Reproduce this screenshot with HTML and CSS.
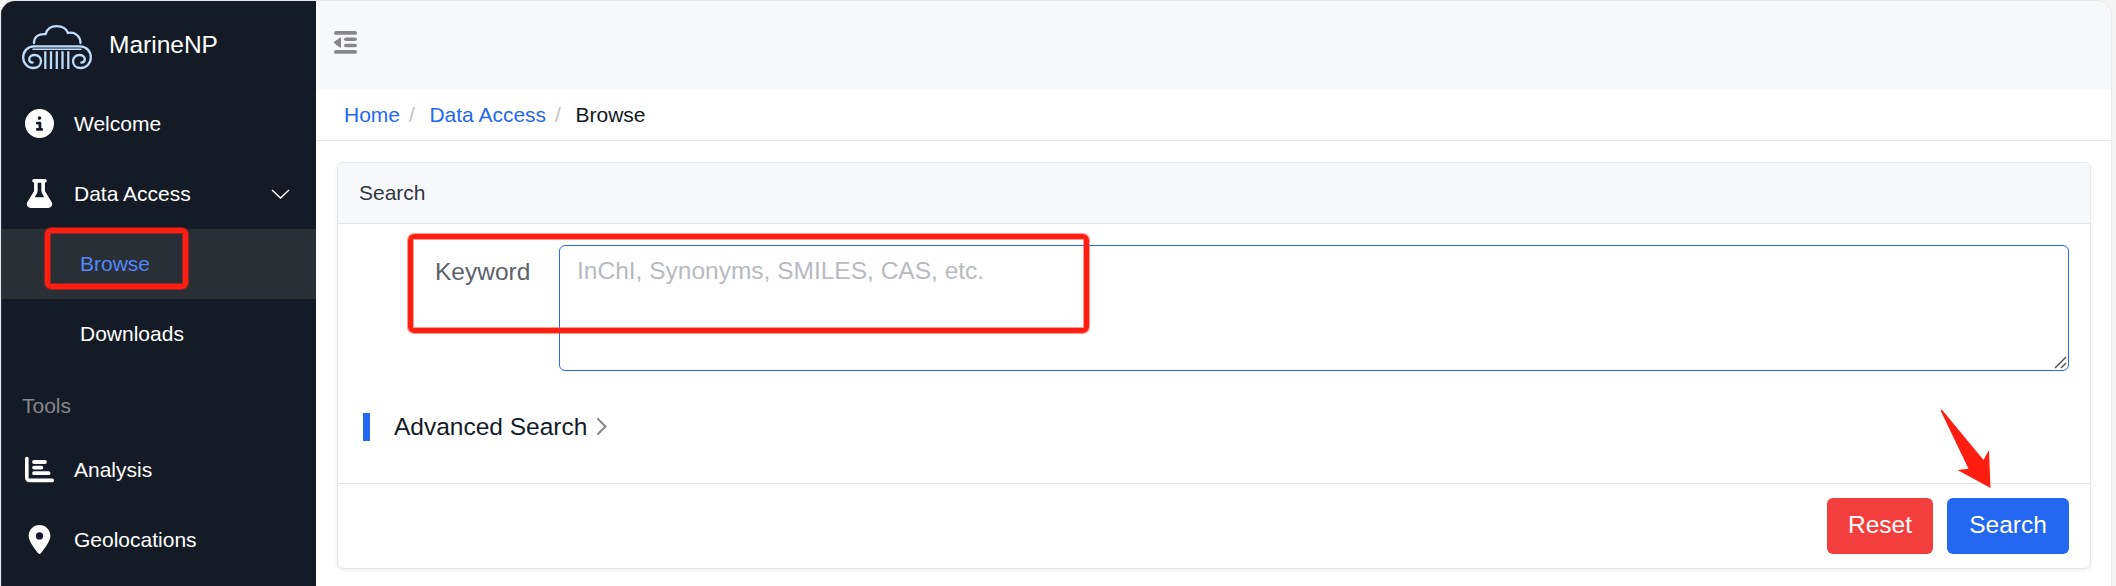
FILE: index.html
```html
<!DOCTYPE html>
<html lang="en">
<head>
<meta charset="utf-8">
<title>MarineNP</title>
<link rel="stylesheet" href="styles.css">
</head>
<body>
<div class="window">
  <aside class="sidebar">
    <div class="brand">
      <svg class="logo" width="70" height="46" viewBox="0 0 70 46" fill="none" stroke="#bcdcfa" stroke-width="2.300" stroke-linecap="round">
        <path d="M12 19C12 12.500 17 9.500 23.500 10.200C25 5 29 2.200 34.500 2.200S44.500 5 46 9C52.500 7.500 58.500 12 58.500 19"/>
        <path d="M11 25.300H59" stroke-width="1.500"/>
        <path d="M12 22.300H58C64.500 22.300 68.800 27.500 68.800 33.500S64 44 59 44C53.500 44 51 40.500 51 37S54 31 57.500 31C60.500 31 62.800 32.800 62.800 35.300C62.800 37.200 61.500 38.600 59.300 38.600"/>
        <path d="M12 22.300C5.500 22.300 1.200 27.500 1.200 33.500S6 44 11 44C16.500 44 19 40.500 19 37S16 31 12.500 31C9.500 31 7.200 32.800 7.200 35.300C7.200 37.200 8.500 38.600 10.700 38.600"/>
        <path d="M23.300 28.500V43.800M29 28.500V43.800M34.800 28.500V43.800M40.500 28.500V43.800M46.300 28.500V43.800" stroke-linecap="square"/>
      </svg>
      <span class="brand-name">MarineNP</span>
    </div>
    <nav class="menu">
      <a class="item"><svg class="icon" viewBox="0 0 512 512" fill="currentColor"><path d="M256 512A256 256 0 1 0 256 0a256 256 0 1 0 0 512zM216 336h24V272H216c-13.300 0-24-10.700-24-24s10.700-24 24-24h48c13.300 0 24 10.700 24 24v88h8c13.300 0 24 10.700 24 24s-10.700 24-24 24H216c-13.300 0-24-10.700-24-24s10.700-24 24-24zm40-208a32 32 0 1 1 0 64 32 32 0 1 1 0-64z"/></svg><span>Welcome</span></a>
      <a class="item"><svg class="icon" viewBox="-32 0 512 512" fill="currentColor"><path d="M288 0H160 128C110.300 0 96 14.300 96 32s14.300 32 32 32V196.800c0 11.800-3.300 23.500-9.500 33.500L10.300 406.200C3.600 417.200 0 429.700 0 442.600C0 480.900 31.100 512 69.400 512H378.600c38.300 0 69.400-31.100 69.400-69.400c0-12.800-3.600-25.400-10.300-36.400L329.500 230.400c-6.200-10.100-9.500-21.700-9.500-33.500V64c17.700 0 32-14.300 32-32s-14.300-32-32-32H288zM192 196.800V64h64V196.800c0 23.700 6.600 46.900 19 67.100L309.500 320h-171L173 263.900c12.400-20.200 19-43.400 19-67.100z"/></svg><span>Data Access</span>
        <svg class="chevron" width="19" height="11" viewBox="0 0 19 11" fill="none" stroke="#fff" stroke-width="1.400"><path d="M1 1L9.500 9L18 1"/></svg></a>
      <a class="item sub active"><span>Browse</span></a>
      <a class="item sub"><span>Downloads</span></a>
      <div class="group">Tools</div>
      <a class="item"><svg class="icon" viewBox="0 0 512 512" fill="currentColor"><path d="M32 32c17.700 0 32 14.300 32 32V400c0 8.800 7.200 16 16 16H480c17.700 0 32 14.300 32 32s-14.300 32-32 32H80c-44.200 0-80-35.800-80-80V64C0 46.300 14.300 32 32 32z"/><path d="M160 90H352a34 34 0 0 1 0 68H160a34 34 0 0 1 0-68zM160 188H288a34 34 0 0 1 0 68H160a34 34 0 0 1 0-68zM160 286H416a34 34 0 0 1 0 68H160a34 34 0 0 1 0-68z"/></svg><span>Analysis</span></a>
      <a class="item"><svg class="icon" viewBox="-64 0 512 512" fill="currentColor"><path d="M215.700 499.200C267 435 384 279.400 384 192C384 86 298 0 192 0S0 86 0 192c0 87.400 117 243 168.300 307.200c12.300 15.300 35.100 15.300 47.400 0zM192 128a64 64 0 1 1 0 128 64 64 0 1 1 0-128z"/></svg><span>Geolocations</span></a>
    </nav>
  </aside>
  <main class="main">
    <header class="topbar">
      <svg class="outdent" width="23" height="23" viewBox="0 0 23 23" fill="#86868b"><rect y="0" width="23" height="3.800" rx="1.900"/><rect x="10" y="6.500" width="13" height="3.600" rx="1.800"/><rect x="10" y="12.700" width="13" height="3.600" rx="1.800"/><rect y="19" width="23" height="3.800" rx="1.900"/><path d="M7 7.200V16a.7.700 0 0 1-1.200.5L.3 12.300a1 1 0 0 1 0-1.500L5.800 6.700A.7.700 0 0 1 7 7.200Z"/></svg>
    </header>
    <div class="crumbs"><a>Home</a><i>/</i><a>Data Access</a><i>/</i><span>Browse</span></div>
    <div class="content">
      <section class="card">
        <div class="card-head">Search</div>
        <div class="card-body">
          <div class="field">
            <label class="label">Keyword</label>
            <div class="textarea">InChI, Synonyms, SMILES, CAS, etc.
              <svg class="grip" width="13" height="13" viewBox="0 0 13 13" fill="none" stroke="#555" stroke-width="1.500"><path d="M1 12L12 1M7 12L12 7"/></svg>
            </div>
          </div>
          <div class="advanced"><b class="bar"></b><span>Advanced Search</span>
            <svg width="12" height="19" viewBox="0 0 12 19" fill="none" stroke="#86868b" stroke-width="2"><path d="M1.500 1.500L9.500 9.500L1.500 17.500"/></svg>
          </div>
        </div>
        <div class="card-foot"><button class="btn reset">Reset</button><button class="btn search">Search</button></div>
      </section>
    </div>
  </main>
</div>
<div class="mark mark-menu"></div>
<div class="mark mark-field"></div>
<svg class="arrow" width="52" height="80" viewBox="0 0 52 80"><path d="M1 .500C1.500.500 2 .800 2.400 1.300L43.500 51L49 41L50.500 79L17.500 61L28.500 59.800L.800 2Z" fill="#ff1e10"/></svg>
</body>
</html>
```

FILE: styles.css
```css
* { box-sizing: border-box; }
body {
  margin: 0;
  height: 586px;
  overflow: hidden;
  background: #f5f5f5;
  font-family: "Liberation Sans", Arial, sans-serif;
  font-size: 21px;
  padding: 1px 5px 0 1px;
}
.window {
  display: flex;
  height: 585px;
  border-radius: 14px 14px 0 0;
  overflow: hidden;
  background: #fff;
  box-shadow: 0 0 0 1px #e9e9ea;
}
.sidebar {
  width: 315px;
  flex: none;
  background: #151b26;
  border-left: 1px solid #26323d;
  color: #fff;
}
.brand {
  display: flex;
  align-items: center;
  height: 88px;
  padding-left: 20px;
  gap: 17px;
}
.logo { margin-top: 4px; }
.brand-name { font-size: 24.5px; margin-top: -1px; }
.item {
  display: flex;
  align-items: center;
  height: 70px;
  padding: 0 26px 0 23px;
  gap: 20px;
}
.icon { width: 29px; height: 29px; margin-top: -1px; }
.chevron { margin-left: auto; }
.sub { padding-left: 78px; }
.active { background: #2a2e35; color: #508afb; }
.group {
  height: 66px;
  padding: 25px 0 0 20px;
  color: #86868b;
}
.main { flex: 1; min-width: 0; }
.topbar {
  height: 88px;
  padding: 30px 0 0 18px;
  background: #f7f8fa;
}
.outdent { display: block; }
.crumbs {
  display: flex;
  align-items: center;
  height: 52px;
  border-bottom: 1px solid #e5e6e8;
  padding-left: 28px;
  color: #111722;
}
.crumbs a { color: #2468f2; }
.crumbs i { font-style: normal; color: #c4c4c6; margin: 0 14.500px 0 9px; }
.content { padding: 21px 20px 0 21px; }
.card {
  border: 1px solid #e5e6e8;
  border-radius: 6px;
  overflow: hidden;
  box-shadow: 0 2px 4px rgba(0, 0, 0, .06);
}
.card-head {
  display: flex;
  align-items: center;
  height: 61px;
  padding-left: 21px;
  background: #f7f8fa;
  border-bottom: 1px solid #e5e6e8;
  color: #303540;
}
.card-body { height: 259px; padding: 21px 21px 0 25px; font-size: 24.5px; }
.field { display: flex; height: 126px; }
.label { width: 196px; padding: 13px 0 0 72px; color: #5e626a; line-height: 28px; }
.textarea {
  flex: 1;
  position: relative;
  border: 1px solid #2468f2;
  border-radius: 6px;
  padding: 11px 17px;
  color: #b8babf;
  line-height: 28px;
}
.grip { position: absolute; right: 1px; bottom: 1px; }
.advanced { display: flex; align-items: center; margin-top: 42px; height: 28px; color: #151b26; }
.bar { width: 7px; height: 28px; background: #2468f2; margin-right: 24px; }
.advanced span { margin-top: -1px; }
.advanced svg { margin-left: 9px; margin-top: -2px; }
.card-foot {
  display: flex;
  justify-content: flex-end;
  gap: 14px;
  height: 85px;
  border-top: 1px solid #e5e6e8;
  padding: 14px 21px 0 0;
}
.btn {
  height: 56px;
  border: 0;
  border-radius: 6px;
  color: #fff;
  font: 24.5px "Liberation Sans", Arial, sans-serif;
  padding: 0 0 3px;
}
.reset { width: 106px; background: #f33e3e; }
.search { width: 122px; background: #2468f2; }
.mark {
  position: absolute;
  border: 5px solid #ff1e10;
  border-radius: 6px;
  box-shadow: 0 0 0 1px rgba(255, 30, 16, .45), inset 0 0 0 1px rgba(255, 30, 16, .45);
}
.mark-menu { left: 45px; top: 228px; width: 143px; height: 61px; }
.mark-field { left: 408px; top: 234px; width: 681px; height: 99px; }
.arrow { position: absolute; left: 1940px; top: 409px; }
```
